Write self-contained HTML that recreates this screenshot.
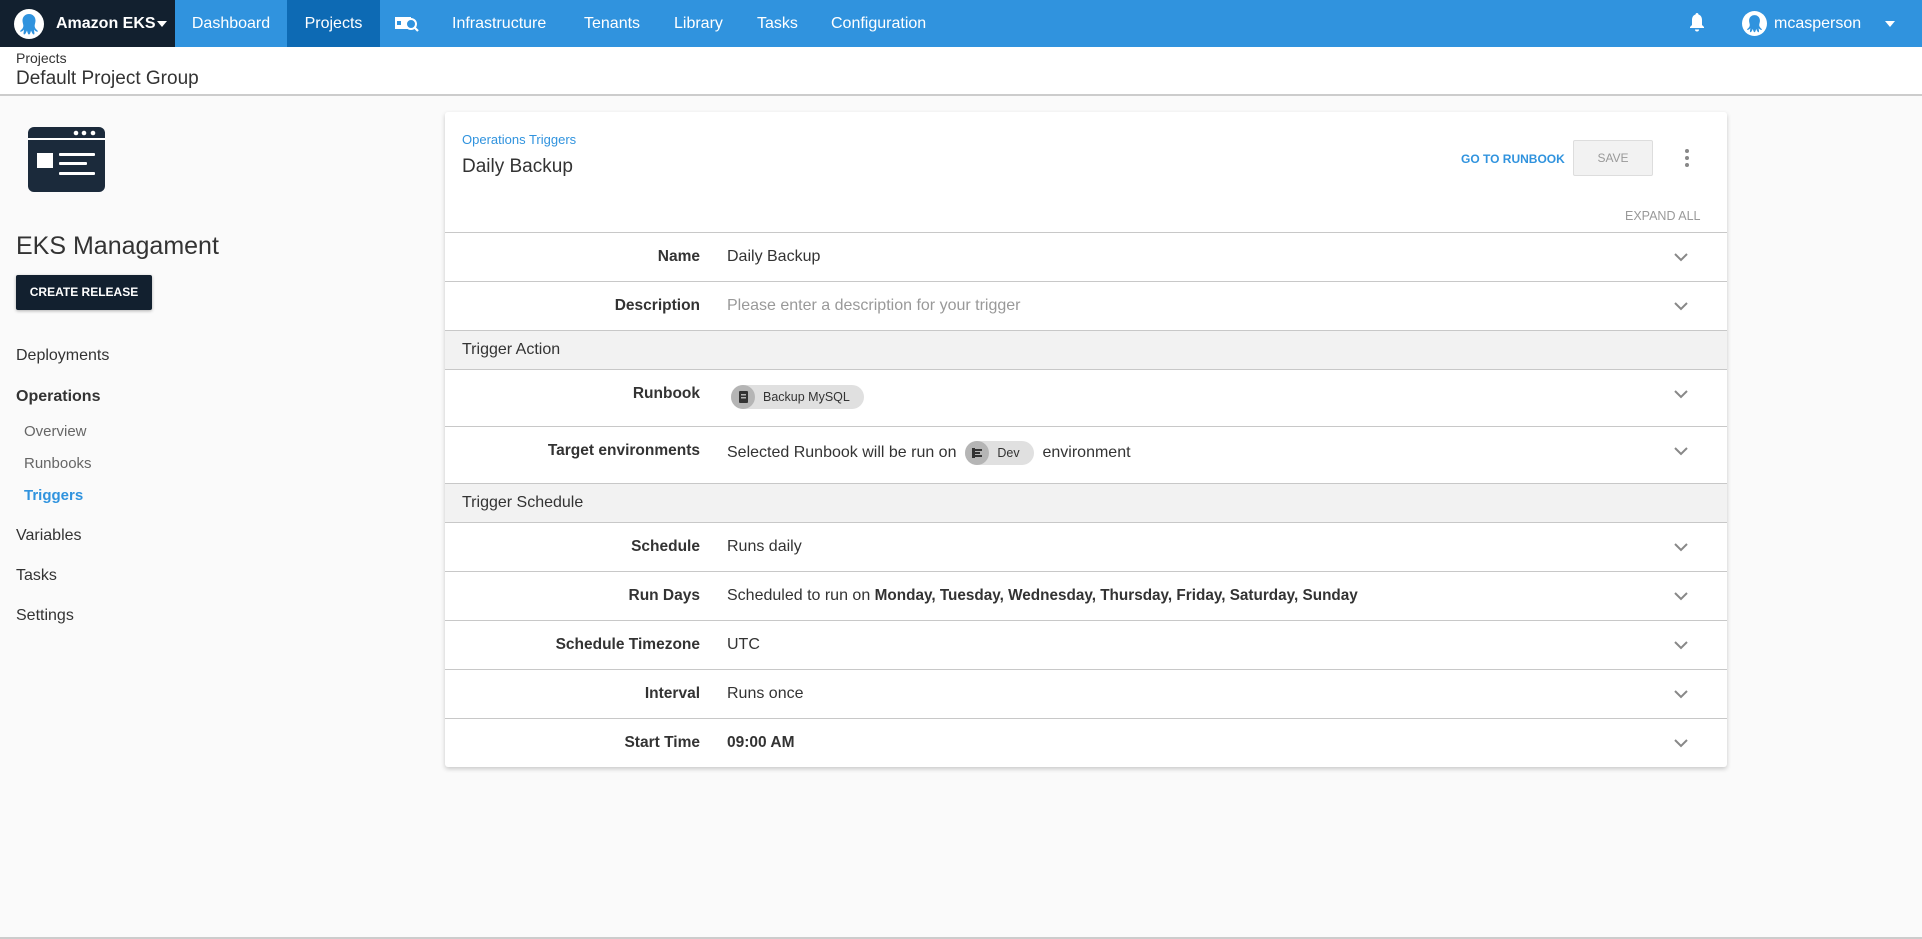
<!DOCTYPE html>
<html><head><meta charset="utf-8">
<style>
*{margin:0;padding:0;box-sizing:border-box}
body{width:1922px;height:939px;background:#fafafa;font-family:"Liberation Sans",sans-serif;position:relative;overflow:hidden;color:#333}
.a{position:absolute;white-space:nowrap}
.nav{position:absolute;left:0;top:0;width:1922px;height:47px;background:#3093de}
.nt{position:absolute;top:0;height:47px;line-height:47px;color:#fff;font-size:16px}
.hdr{position:absolute;left:0;top:47px;width:1922px;height:49px;background:#fff;border-bottom:2px solid #ccc}
.card{position:absolute;left:445px;top:112px;width:1282px;height:655px;background:#fff;border-radius:3px;box-shadow:0 2px 5px rgba(0,0,0,.2)}
.row{position:absolute;left:0;width:1282px;border-top:1px solid #c8c8c8}
.lbl{position:absolute;right:1027px;font-weight:bold;font-size:15.5px;color:#333}
.val{position:absolute;left:282px;font-size:16px;color:#333}
.val b{font-size:15.3px}
.chev{position:absolute;left:1228px;width:16px;height:10px}
.sec{background:#f2f2f2}
.sec span{position:absolute;left:17px;font-size:16px;color:#333}
.side{position:absolute;left:16px;font-size:16px;color:#333}
.sub{position:absolute;left:24px;font-size:15px;color:#666}
.chip{display:inline-block;vertical-align:middle;height:24px;line-height:24px;border-radius:12px;background:#e0e0e0;font-size:12.5px;color:#333;padding:0 14px 0 32px;position:relative}
.chip i{position:absolute;left:0;top:0;width:24px;height:24px;border-radius:12px;background:#b5b5b5}
</style></head><body>
<div class="nav">
  <div class="a" style="left:0;top:0;width:175px;height:47px;background:#12202f"></div>
  <svg class="a" style="left:14px;top:9px" width="30" height="30" viewBox="0 0 30 30"><circle cx="15" cy="15" r="15" fill="#fff"/><path d="M15 5c-4 0-6.5 3-6.5 6.5 0 3 1.5 4.5 0.5 7-0.8 2-3 3-3 4 1.5 0.5 3-0.5 4-2 0 2-1 4 0 5 1.5 0 2.3-2.5 3-4 0.5 2 1 4 2 4s1.5-2 2-4c0.7 1.5 1.5 4 3 4 1-1 0-3 0-5 1 1.5 2.5 2.5 4 2 0-1-2.2-2-3-4-1-2.5 0.5-4 0.5-7C21.5 8 19 5 15 5z" fill="#3093de"/></svg>
  <div class="nt" style="left:56px;font-weight:bold">Amazon EKS</div>
  <svg class="a" style="left:157px;top:21px" width="10" height="6"><path d="M0 0h10L5 6z" fill="#fff"/></svg>
  <div class="nt" style="left:175px;width:112px;text-align:center">Dashboard</div>
  <div class="nt" style="left:287px;width:93px;text-align:center;background:#0d6ab4">Projects</div>
  <svg class="a" style="left:395px;top:15px" width="24" height="18" viewBox="0 0 24 18"><rect x="0" y="2" width="16" height="12" fill="#fff"/><rect x="2" y="6" width="4" height="4" fill="#3093de"/><circle cx="16" cy="9" r="5" fill="#3093de" stroke="#fff" stroke-width="2"/><path d="M19.5 12.5l3.5 3.5" stroke="#fff" stroke-width="2.2"/></svg>
  <div class="nt" style="left:452px">Infrastructure</div>
  <div class="nt" style="left:584px">Tenants</div>
  <div class="nt" style="left:674px">Library</div>
  <div class="nt" style="left:757px">Tasks</div>
  <div class="nt" style="left:831px">Configuration</div>
  <svg class="a" style="left:1689px;top:12px" width="16" height="20" viewBox="0 0 16 20"><path d="M8 1c-1 0-1.5.8-1.5 1.5C4 3.3 3 5.5 3 8v5l-2 2v1h14v-1l-2-2V8c0-2.5-1-4.7-3.5-5.5C9.5 1.8 9 1 8 1z" fill="#fff"/><path d="M6 17.5a2 2 0 0 0 4 0z" fill="#fff"/></svg>
  <svg class="a" style="left:1742px;top:11px" width="25" height="25" viewBox="0 0 30 30"><circle cx="15" cy="15" r="15" fill="#fff"/><path d="M15 5c-4 0-6.5 3-6.5 6.5 0 3 1.5 4.5 0.5 7-0.8 2-3 3-3 4 1.5 0.5 3-0.5 4-2 0 2-1 4 0 5 1.5 0 2.3-2.5 3-4 0.5 2 1 4 2 4s1.5-2 2-4c0.7 1.5 1.5 4 3 4 1-1 0-3 0-5 1 1.5 2.5 2.5 4 2 0-1-2.2-2-3-4-1-2.5 0.5-4 0.5-7C21.5 8 19 5 15 5z" fill="#3093de"/></svg>
  <div class="nt" style="left:1774px">mcasperson</div>
  <svg class="a" style="left:1885px;top:21px" width="10" height="6"><path d="M0 0h10L5 6z" fill="#fff"/></svg>
</div>
<div class="hdr">
  <div class="a" style="left:16px;top:3px;font-size:14px;color:#333">Projects</div>
  <div class="a" style="left:16px;top:21px;font-size:19px;color:#333">Default Project Group</div>
</div>

<svg class="a" style="left:28px;top:127px" width="77" height="65" viewBox="0 0 77 65"><rect x="0" y="0" width="77" height="65" rx="6" fill="#1b2a3b"/><rect x="0" y="11" width="77" height="2" fill="#fff"/><circle cx="48" cy="6" r="2.3" fill="#fff"/><circle cx="56" cy="6" r="2.3" fill="#fff"/><circle cx="65" cy="6" r="2.3" fill="#fff"/><rect x="9" y="26" width="16" height="15" fill="#fff"/><rect x="31" y="26" width="36" height="3" rx="1" fill="#fff"/><rect x="31" y="35" width="28" height="3" rx="1" fill="#fff"/><rect x="31" y="45" width="36" height="3" rx="1" fill="#fff"/></svg>
<div class="a" style="left:16px;top:232px;font-size:25px;color:#333">EKS Managament</div>
<div class="a" style="left:16px;top:275px;width:136px;height:35px;background:#12202f;border-radius:2px;box-shadow:0 1px 3px rgba(0,0,0,.3);color:#fff;font-size:12px;font-weight:bold;line-height:35px;text-align:center">CREATE RELEASE</div>
<div class="side" style="top:347px">Deployments</div>
<div class="side" style="top:388px;font-weight:bold">Operations</div>
<div class="sub" style="top:423px">Overview</div>
<div class="sub" style="top:455px">Runbooks</div>
<div class="sub" style="top:487px;color:#3093de;font-weight:bold">Triggers</div>
<div class="side" style="top:527px">Variables</div>
<div class="side" style="top:567px">Tasks</div>
<div class="side" style="top:607px">Settings</div>

<div class="card">
  <div class="a" style="left:17px;top:20px;font-size:13px;color:#3093de">Operations Triggers</div>
  <div class="a" style="left:17px;top:44px;font-size:19px;color:#333">Daily Backup</div>
  <div class="a" style="left:1016px;top:40px;font-size:12px;font-weight:bold;color:#3093de">GO TO RUNBOOK</div>
  <div class="a" style="left:1128px;top:28px;width:80px;height:36px;background:#f2f2f2;border:1px solid #ddd;border-radius:2px;font-size:12px;color:#999;text-align:center;line-height:34px">SAVE</div>
  <svg class="a" style="left:1239px;top:37px" width="6" height="18"><circle cx="3" cy="2" r="2" fill="#888"/><circle cx="3" cy="9" r="2" fill="#888"/><circle cx="3" cy="16" r="2" fill="#888"/></svg>
  <div class="a" style="left:1180px;top:97px;font-size:12.5px;color:#999">EXPAND ALL</div>

  <div class="row" style="top:120px;height:49px"><div class="lbl" style="top:15px">Name</div><div class="val" style="top:15px">Daily Backup</div><svg class="chev" style="top:20px"><path d="M2 1l6 6 6-6" fill="none" stroke="#888" stroke-width="2"/></svg></div>
  <div class="row" style="top:169px;height:49px"><div class="lbl" style="top:15px">Description</div><div class="val" style="top:15px;color:#999">Please enter a description for your trigger</div><svg class="chev" style="top:20px"><path d="M2 1l6 6 6-6" fill="none" stroke="#888" stroke-width="2"/></svg></div>
  <div class="row sec" style="top:218px;height:39px"><span style="top:10px">Trigger Action</span></div>
  <div class="row" style="top:257px;height:57px"><div class="lbl" style="top:15px">Runbook</div><div class="val" style="top:15px;left:286px"><span class="chip"><i><svg width="24" height="24"><rect x="8" y="6" width="9" height="12" rx="1" fill="#333"/><rect x="10" y="9" width="5" height="1.5" fill="#b5b5b5"/><rect x="10" y="12" width="5" height="1.5" fill="#b5b5b5"/></svg></i>Backup MySQL</span></div><svg class="chev" style="top:20px"><path d="M2 1l6 6 6-6" fill="none" stroke="#888" stroke-width="2"/></svg></div>
  <div class="row" style="top:314px;height:57px"><div class="lbl" style="top:15px">Target environments</div><div class="val" style="top:14px">Selected Runbook will be run on &nbsp;<span class="chip"><i><svg width="24" height="24"><rect x="7" y="7" width="3" height="10" fill="#333"/><rect x="10" y="8" width="7" height="2" fill="#333"/><rect x="10" y="11" width="5" height="2" fill="#333"/><rect x="10" y="14" width="7" height="2" fill="#333"/></svg></i>Dev</span>&nbsp; environment</div><svg class="chev" style="top:20px"><path d="M2 1l6 6 6-6" fill="none" stroke="#888" stroke-width="2"/></svg></div>
  <div class="row sec" style="top:371px;height:39px"><span style="top:10px">Trigger Schedule</span></div>
  <div class="row" style="top:410px;height:49px"><div class="lbl" style="top:15px">Schedule</div><div class="val" style="top:15px">Runs daily</div><svg class="chev" style="top:20px"><path d="M2 1l6 6 6-6" fill="none" stroke="#888" stroke-width="2"/></svg></div>
  <div class="row" style="top:459px;height:49px"><div class="lbl" style="top:15px">Run Days</div><div class="val" style="top:15px">Scheduled to run on <b>Monday, Tuesday, Wednesday, Thursday, Friday, Saturday, Sunday</b></div><svg class="chev" style="top:20px"><path d="M2 1l6 6 6-6" fill="none" stroke="#888" stroke-width="2"/></svg></div>
  <div class="row" style="top:508px;height:49px"><div class="lbl" style="top:15px">Schedule Timezone</div><div class="val" style="top:15px">UTC</div><svg class="chev" style="top:20px"><path d="M2 1l6 6 6-6" fill="none" stroke="#888" stroke-width="2"/></svg></div>
  <div class="row" style="top:557px;height:49px"><div class="lbl" style="top:15px">Interval</div><div class="val" style="top:15px">Runs once</div><svg class="chev" style="top:20px"><path d="M2 1l6 6 6-6" fill="none" stroke="#888" stroke-width="2"/></svg></div>
  <div class="row" style="top:606px;height:49px"><div class="lbl" style="top:15px">Start Time</div><div class="val" style="top:15px;font-weight:bold;font-size:15.5px">09:00 AM</div><svg class="chev" style="top:20px"><path d="M2 1l6 6 6-6" fill="none" stroke="#888" stroke-width="2"/></svg></div>
</div>
<div class="a" style="left:0;top:937px;width:1922px;height:2px;background:#ccc"></div>
</body></html>
